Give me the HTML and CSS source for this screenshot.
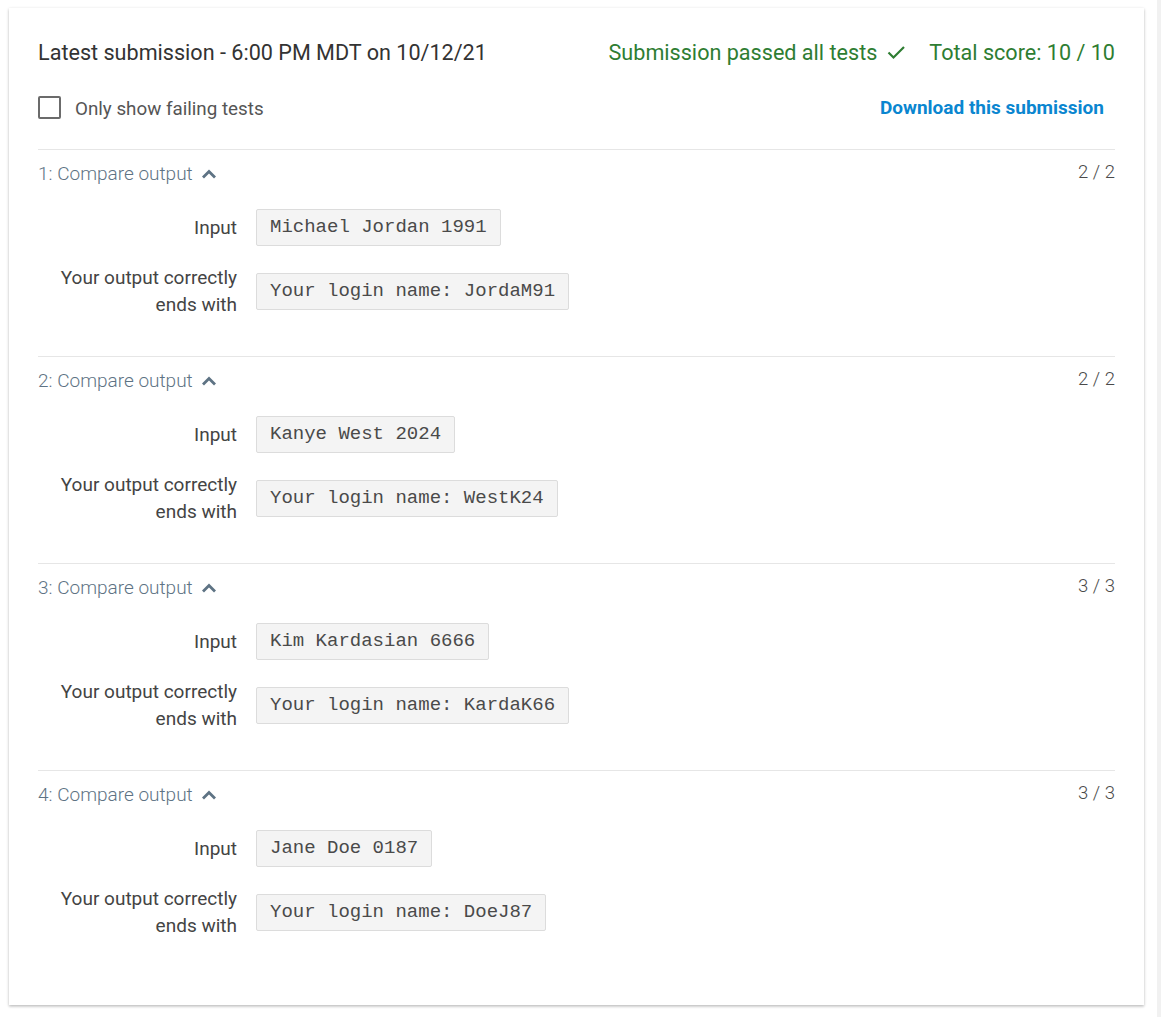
FILE: index.html
```html
<!DOCTYPE html>
<html>
<head>
<meta charset="utf-8">
<link rel="stylesheet" href="styles.css">
</head>
<body>
<div class="page">
  <div class="card">
    <div class="header">
      <div class="title">Latest submission - 6:00 PM MDT on 10/12/21</div>
      <div class="status">
        <span class="passed">Submission passed all tests
          <svg class="check" viewBox="0 0 24 24" width="24" height="24"><path d="M4.5 12.5 L9.5 17.5 L20 7" fill="none" stroke="#2e7d32" stroke-width="2.2"/></svg>
        </span>
        <span class="total">Total score: 10 / 10</span>
      </div>
    </div>
    <div class="controls">
      <label class="filter"><span class="box"></span><span>Only show failing tests</span></label>
      <a class="download">Download this submission</a>
    </div>

    <div class="test">
      <div class="test-head">
        <div class="test-name">1: Compare output <svg class="chev" viewBox="0 0 16 10" width="16" height="10"><path d="M2 8.5 L8 2.5 L14 8.5" fill="none" stroke="#5e7384" stroke-width="2.8"/></svg></div>
        <div class="score">2 / 2</div>
      </div>
      <div class="row"><div class="label">Input</div><div class="code">Michael Jordan 1991</div></div>
      <div class="row"><div class="label">Your output correctly<br>ends with</div><div class="code">Your login name: JordaM91</div></div>
    </div>

    <div class="test">
      <div class="test-head">
        <div class="test-name">2: Compare output <svg class="chev" viewBox="0 0 16 10" width="16" height="10"><path d="M2 8.5 L8 2.5 L14 8.5" fill="none" stroke="#5e7384" stroke-width="2.8"/></svg></div>
        <div class="score">2 / 2</div>
      </div>
      <div class="row"><div class="label">Input</div><div class="code">Kanye West 2024</div></div>
      <div class="row"><div class="label">Your output correctly<br>ends with</div><div class="code">Your login name: WestK24</div></div>
    </div>

    <div class="test">
      <div class="test-head">
        <div class="test-name">3: Compare output <svg class="chev" viewBox="0 0 16 10" width="16" height="10"><path d="M2 8.5 L8 2.5 L14 8.5" fill="none" stroke="#5e7384" stroke-width="2.8"/></svg></div>
        <div class="score">3 / 3</div>
      </div>
      <div class="row"><div class="label">Input</div><div class="code">Kim Kardasian 6666</div></div>
      <div class="row"><div class="label">Your output correctly<br>ends with</div><div class="code">Your login name: KardaK66</div></div>
    </div>

    <div class="test">
      <div class="test-head">
        <div class="test-name">4: Compare output <svg class="chev" viewBox="0 0 16 10" width="16" height="10"><path d="M2 8.5 L8 2.5 L14 8.5" fill="none" stroke="#5e7384" stroke-width="2.8"/></svg></div>
        <div class="score">3 / 3</div>
      </div>
      <div class="row"><div class="label">Input</div><div class="code">Jane Doe 0187</div></div>
      <div class="row"><div class="label">Your output correctly<br>ends with</div><div class="code">Your login name: DoeJ87</div></div>
    </div>
  </div>
  <div class="track"></div>
</div>
</body>
</html>
```

FILE: styles.css
```css
html, body {
  margin: 0;
  padding: 0;
  background: #ffffff;
}
body {
  font-family: Roboto, "Liberation Sans", sans-serif;
  color: #333;
}
.page {
  display: flex;
  align-items: flex-start;
  padding: 8px 0 0 9px;
  height: 1017px;
  box-sizing: border-box;
}
.card {
  width: 1135px;
  box-sizing: border-box;
  padding: 30px 29px 28px 29px;
  background: #fff;
  box-shadow: 0 1px 3px rgba(0,0,0,0.22), 0 2px 2px rgba(0,0,0,0.08);
}
.track {
  width: 4px;
  height: 1017px;
  margin-top: -8px;
  margin-left: 13px;
  background: #f1f1f1;
}
.header {
  display: flex;
  justify-content: space-between;
  align-items: center;
  height: 28px;
}
.title {
  font-size: 21.6px;
  color: #333;
}
.status {
  display: flex;
  align-items: center;
  gap: 21px;
  font-size: 21.6px;
  color: #2e7d32;
}
.passed {
  display: flex;
  align-items: center;
  gap: 7px;
}
.check {
  display: block;
}
.controls {
  margin-top: 27px;
  height: 28px;
  display: flex;
  align-items: center;
  justify-content: space-between;
  margin-bottom: 28px;
}
.filter {
  display: flex;
  align-items: center;
  font-size: 18.8px;
  color: #555;
}
.filter span:last-child {
  padding-top: 3px;
}
.box {
  width: 19px;
  height: 19px;
  border: 2px solid #6b6b6b;
  border-radius: 2px;
  margin-right: 14px;
}
.download {
  font-size: 19px;
  font-weight: 700;
  color: #0a86d0;
  margin-right: 11px;
}
.test {
  border-top: 1px solid #e6e6e6;
  padding: 12px 0 38px 0;
}
.test-head {
  display: flex;
  justify-content: space-between;
  align-items: flex-start;
  margin-bottom: 23px;
}
.test-name {
  font-size: 19px;
  line-height: 24px;
  font-weight: 300;
  color: #5e7384;
  display: flex;
  align-items: center;
  gap: 8px;
}
.chev {
  display: block;
}
.score {
  font-size: 18.5px;
  line-height: 20px;
  color: #4a4a4a;
  font-weight: 300;
}
.row {
  display: flex;
  align-items: center;
  gap: 19px;
}
.row + .row {
  margin-top: 18px;
}
.label {
  width: 199px;
  text-align: right;
  font-size: 19px;
  line-height: 27px;
  font-weight: 400;
  color: #444;
}
.code {
  font-family: "Liberation Mono", "Courier New", monospace;
  font-size: 19px;
  line-height: 23px;
  padding: 6px 13px;
  background: #f4f4f4;
  border: 1px solid #dcdcdc;
  border-radius: 2px;
  color: #4a4a4a;
}
```
